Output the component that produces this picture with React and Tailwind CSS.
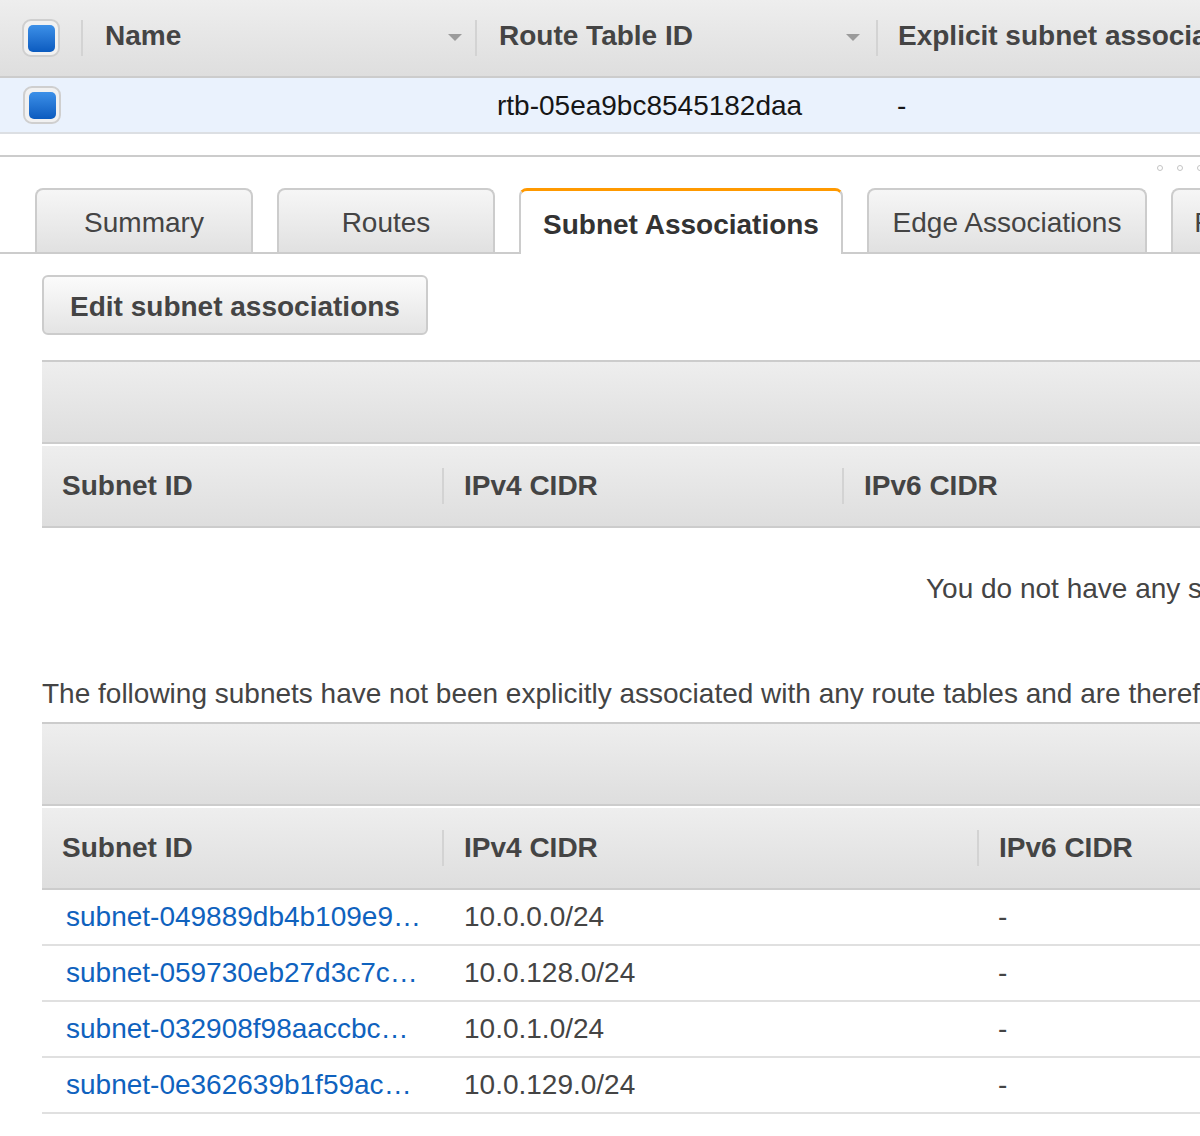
import React from 'react'

const grad = 'bg-linear-to-b from-[#eeeeee] to-[#dedede]'

const Check = () => (
  <div className="w-[38px] h-[38px] rounded-[9px] border-2 border-[#cfcfcf] bg-[#f1f1f1] flex items-center justify-center shrink-0">
    <div className="w-[27px] h-[27px] rounded-[5px] bg-linear-to-b from-[#3c90e8] to-[#0a5bbf]" />
  </div>
)

const Divider = () => <div className="w-[2px] h-[36px] bg-[#d3d3d3] shrink-0" />

const Caret = () => (
  <svg width="14" height="8" viewBox="0 0 14 8" className="shrink-0">
    <polygon points="0,0 14,0 7,7" fill="#9b9b9b" />
  </svg>
)

const Tab = ({ label, width, active }) =>
  active ? (
    <div
      className={`${width} h-[66px] -mb-[2px] shrink-0 flex items-center justify-center pt-[5px] rounded-t-[8px] border-x-2 border-[#cccccc] border-t-[3px] border-t-[#ff9900] bg-white font-bold text-[#333]`}
    >
      {label}
    </div>
  ) : (
    <div
      className={`${width} h-[64px] shrink-0 flex items-center justify-center pt-[3px] rounded-t-[8px] border-2 border-b-0 border-[#cccccc] bg-linear-to-b from-[#f6f6f6] to-[#e1e1e1]`}
    >
      {label}
    </div>
  )

const TableHead = ({ cols }) => (
  <div className="flex flex-col">
    <div className={`h-[84px] border-y-2 border-[#cccccc] ${grad}`} />
    <div className={`h-[84px] border-t-2 border-t-white border-b-2 border-b-[#cccccc] ${grad} flex items-center font-bold`}>
      {cols.map((c, i) => (
        <React.Fragment key={c.label}>
          {i > 0 && <Divider />}
          <div className={`${c.width} shrink-0 pl-[20px]`}>{c.label}</div>
        </React.Fragment>
      ))}
    </div>
  </div>
)

const subnets = [
  { id: 'subnet-049889db4b109e9a1', cidr: '10.0.0.0/24' },
  { id: 'subnet-059730eb27d3c7ce4b', cidr: '10.0.128.0/24' },
  { id: 'subnet-032908f98aaccbc5d2', cidr: '10.0.1.0/24' },
  { id: 'subnet-0e362639b1f59ac3f8', cidr: '10.0.129.0/24' },
]

export default function App() {
  return (
    <div className="w-[1200px] h-[1136px] overflow-hidden bg-white text-[28px] text-[#444] whitespace-nowrap font-['Liberation_Sans',Arial,Helvetica,sans-serif]">
      {/* route tables list */}
      <div className={`h-[78px] flex items-center border-b-2 border-[#cccccc] ${grad} font-bold`}>
        <div className="w-[81px] shrink-0 pl-[22px]"><Check /></div>
        <Divider />
        <div className="w-[392px] shrink-0 pl-[22px] pr-[13px] flex items-center justify-between">
          <span className="pb-[5px]">Name</span>
          <Caret />
        </div>
        <Divider />
        <div className="w-[399px] shrink-0 pl-[22px] pr-[16px] flex items-center justify-between">
          <span className="pb-[5px]">Route Table ID</span>
          <Caret />
        </div>
        <Divider />
        <div className="shrink-0 pl-[20px] pb-[5px]">Explicit subnet association</div>
      </div>
      <div className="h-[56px] flex items-center bg-[#eaf2fd] border-b-2 border-[#dcdfe3] text-[#161616]">
        <div className="w-[83px] shrink-0 pl-[23px]"><Check /></div>
        <div className="w-[394px] shrink-0" />
        <div className="w-[401px] shrink-0 pl-[20px] pt-[2px]">rtb-05ea9bc8545182daa</div>
        <div className="shrink-0 pl-[19px] pt-[2px]">-</div>
      </div>

      {/* splitter */}
      <div className="mt-[21px] border-t-2 border-[#cccccc]" />
      <div className="h-[31px] flex items-start pt-[8px] pl-[1157px] gap-[14px]">
        {[0, 1, 2].map((d) => (
          <div key={d} className="w-[6px] h-[6px] rounded-full border border-[#c4c4c4] shrink-0" />
        ))}
      </div>

      {/* tabs */}
      <div className="h-[66px] flex items-end gap-[24px] pl-[35px] border-b-2 border-[#cccccc]">
        <Tab label="Summary" width="w-[218px]" />
        <Tab label="Routes" width="w-[218px]" />
        <Tab label="Subnet Associations" width="w-[324px]" active />
        <Tab label="Edge Associations" width="w-[280px]" />
        <Tab label="Route Propagation" width="w-[280px]" />
        <Tab label="Tags" width="w-[218px]" />
      </div>

      <div className="pl-[42px]">
        <button className="mt-[21px] h-[60px] w-[386px] pt-[3px] rounded-[6px] border-2 border-[#cccccc] bg-linear-to-b from-[#fbfbfb] to-[#e4e4e4] font-bold text-[#444] flex items-center justify-center">
          Edit subnet associations
        </button>

        {/* explicit associations */}
        <div className="mt-[25px]">
          <TableHead
            cols={[
              { label: 'Subnet ID', width: 'w-[400px]' },
              { label: 'IPv4 CIDR', width: 'w-[398px]' },
              { label: 'IPv6 CIDR', width: 'w-[400px]' },
            ]}
          />
          <div className="h-[122px] flex items-center pl-[884px]">
            You do not have any subnet associations.
          </div>
        </div>

        <p className="mt-[27px] h-[34px] leading-[34px]">
          The following subnets have not been explicitly associated with any route tables and are therefore associated with the main route table:
        </p>

        {/* implicit associations */}
        <div className="mt-[11px]">
          <TableHead
            cols={[
              { label: 'Subnet ID', width: 'w-[400px]' },
              { label: 'IPv4 CIDR', width: 'w-[533px]' },
              { label: 'IPv6 CIDR', width: 'w-[400px]' },
            ]}
          />
          {subnets.map((s) => (
            <div key={s.id} className="h-[56px] flex items-center border-b-2 border-[#e0e0e0]">
              <a className="w-[400px] shrink-0 pl-[24px] pr-[20px] overflow-hidden text-ellipsis text-[#0f62be]">
                {s.id}
              </a>
              <div className="w-[535px] shrink-0 pl-[22px]">{s.cidr}</div>
              <div className="shrink-0 pl-[21px]">-</div>
            </div>
          ))}
        </div>
      </div>
    </div>
  )
}
